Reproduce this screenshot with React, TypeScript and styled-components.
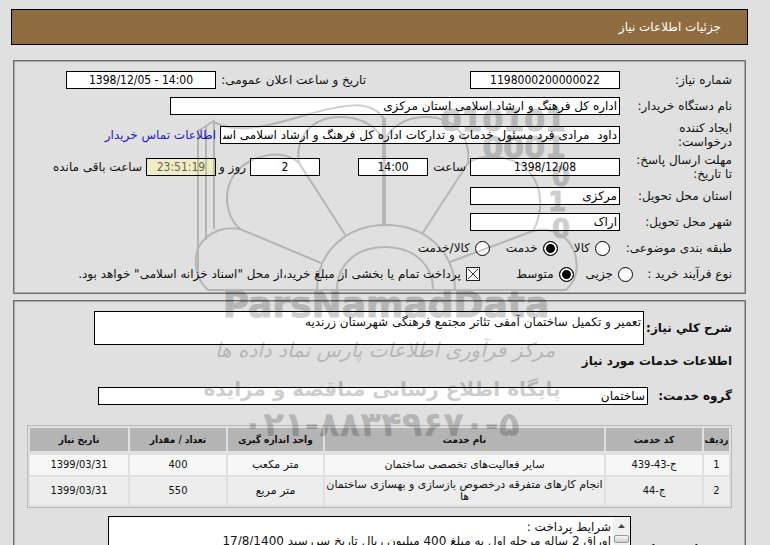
import React from "react";
import styled, { createGlobalStyle } from "styled-components";

const GlobalStyle = createGlobalStyle`
  *, *::before, *::after { box-sizing: border-box; }
  html { overflow-y: auto; scrollbar-width: none; }
  body {
    margin: 0;
    background: #e0e0e0;
    color: #111;
    font-family: "DejaVu Sans", Tahoma, sans-serif;
    font-size: 12px;
    line-height: 14px;
  }
  input, textarea { font: inherit; color: inherit; }
`;

const Page = styled.div`
  position: relative;
  overflow: hidden;
  padding: 9px 22px 12px 11px;
`;

const TitleBar = styled.header`
  display: flex;
  align-items: center;
  height: 36px;
  padding: 0 26px;
  border: 1px solid #000;
  background: #8f6d40;
`;

const Title = styled.h1`
  margin: 0;
  color: #fff;
  font-size: 12px;
  font-weight: normal;
`;

const Panel = styled.section<{ $top: number }>`
  margin: ${(p) => p.$top}px 2px 0;
  padding: 6px 13px;
  border: 1px solid #6e6e6e;
  box-shadow: inset 0 0 0 1px #a8a8a8;
`;

const Row = styled.div<{ $tall?: boolean }>`
  display: flex;
  align-items: center;
  gap: 4px;
  height: ${(p) => (p.$tall ? 32 : 26)}px;
  white-space: nowrap;
`;

const Label = styled.label<{ $width?: number; $bold?: boolean }>`
  flex: none;
  width: ${(p) => (p.$width ? `${p.$width}px` : "auto")};
  font-weight: ${(p) => (p.$bold ? "bold" : "normal")};
  white-space: nowrap;
`;

const TermsLabel = styled(Label)`
  font-family: "DejaVu Sans Condensed", "DejaVu Sans", sans-serif;
`;

const SideLabel = styled(Label)`
  width: 246px;
  padding-right: 100px;
`;

const Field = styled.input<{ $width: number; $center?: boolean; $timer?: boolean }>`
  flex: 0 1 ${(p) => p.$width}px;
  width: ${(p) => p.$width}px;
  min-width: 0;
  height: 18px;
  padding: 0 2px;
  border: 1px solid #000;
  border-radius: 0;
  outline: none;
  background: ${(p) => (p.$timer ? "#f0ecc6" : "#fff")};
  color: ${(p) => (p.$timer ? "#66664f" : "#000")};
  font-family: ${(p) => (p.$center ? '"DejaVu Sans Condensed", ' : "")}"DejaVu Sans", sans-serif;
  text-align: ${(p) => (p.$center ? "center" : "right")};
`;

const Spacer = styled.span<{ $width: number }>`
  flex: none;
  width: ${(p) => p.$width}px;
`;

const BuyerLink = styled.a`
  color: #1a1acc;
  text-decoration: none;
`;

const Choice = styled.label<{ $gap: number }>`
  display: flex;
  align-items: center;
  gap: 5px;
  margin-right: ${(p) => p.$gap}px;
`;

const Radio = styled.input.attrs({ type: "radio" })`
  appearance: none;
  width: 15px;
  height: 15px;
  margin: 0;
  border: 1px solid #000;
  border-radius: 50%;
  background: #fff;
  &:checked {
    background: #000;
    box-shadow: inset 0 0 0 2px #fff;
  }
`;

const TickBox = styled.span`
  display: grid;
  width: 14px;
  height: 14px;
  > * { grid-area: 1 / 1; }
  svg { pointer-events: none; }
`;

const Check = styled.input.attrs({ type: "checkbox" })`
  appearance: none;
  width: 14px;
  height: 14px;
  margin: 0;
  border: 1px solid #222;
  background: #fff;
  &:not(:checked) + svg { display: none; }
`;

const Description = styled.textarea`
  flex: 0 1 550px;
  min-width: 0;
  height: 34px;
  padding: 3px 2px;
  border: 1px solid #000;
  outline: none;
  resize: none;
  overflow: hidden;
  background: #fff;
`;

const DescriptionRow = styled.div`
  display: flex;
  align-items: center;
  padding-top: 4px;
`;

const SectionTitle = styled.h2`
  margin: 8px 0 18px;
  font-size: 12px;
  line-height: 16px;
  font-weight: bold;
`;

const GroupRow = styled.div`
  display: flex;
  align-items: center;
`;

const Services = styled.table`
  width: 100%;
  margin: 20px 0 8px;
  table-layout: fixed;
  border: 1px solid #b9b9b9;
  border-spacing: 2px;
  font-size: 11px;
  line-height: 12px;
  text-align: center;
`;

const Column = styled.col<{ $width?: number }>`
  width: ${(p) => (p.$width ? `${p.$width}px` : "auto")};
`;

const Head = styled.th`
  height: 25px;
  padding: 0;
  border-bottom: 2px solid transparent;
  background: #b4b4b4;
  background-clip: padding-box;
  white-space: nowrap;
  font-family: "DejaVu Sans Condensed", "DejaVu Sans", sans-serif;
  font-size: 10px;
`;

const Cell = styled.td<{ $shade?: boolean; $numeric?: boolean }>`
  height: ${(p) => (p.$shade ? 28 : 20)}px;
  padding: 1px 0;
  background: ${(p) => (p.$shade ? "#ededed" : "#f7f7f7")};
  font-family: ${(p) => (p.$numeric ? '"DejaVu Sans Condensed", ' : "")}"DejaVu Sans", sans-serif;
`;

const TermsRow = styled.div`
  display: flex;
  align-items: center;
`;

const TermsFrame = styled.div`
  display: flex;
  flex: 0 1 523px;
  min-width: 0;
  height: 66px;
  border: 1px solid #000;
  background: #fff;
`;

const Terms = styled.textarea`
  flex: 1;
  min-width: 0;
  padding: 3px 2px;
  border: 0;
  outline: none;
  resize: none;
  overflow: hidden;
  background: transparent;
`;

const ScrollTrack = styled.div`
  display: flex;
  flex-direction: column;
  align-items: center;
  width: 17px;
  background: #f0f0f0;
`;

const ScrollUp = styled.button`
  display: grid;
  place-items: center;
  width: 17px;
  height: 18px;
  padding: 0;
  border: 0;
  background: transparent;
`;

const ScrollThumb = styled.div`
  width: 15px;
  height: 8px;
  border: 1px solid #999;
  border-radius: 2px;
  background: linear-gradient(#f6f6f6, #cfcfcf);
`;

const Mark = styled.svg`
  position: absolute;
  top: 95px;
  left: 185px;
  width: 400px;
  height: 355px;
  pointer-events: none;
  opacity: 0.19;
  fill: none;
  stroke: #000;
  stroke-width: 2;
`;

const MarkText = styled.text<{ $heavy?: boolean; $script?: boolean }>`
  direction: ltr;
  fill: #000;
  stroke: ${(p) => (p.$heavy ? "#000" : "none")};
  stroke-width: 1;
  font-family: "DejaVu Sans", sans-serif;
  font-weight: ${(p) => (p.$script ? "normal" : "bold")};
  font-style: ${(p) => (p.$script ? "italic" : "normal")};
`;

const columns = [
  { title: "ردیف", width: 25 },
  { title: "کد خدمت", width: 96 },
  { title: "نام خدمت" },
  { title: "واحد اندازه گیری", width: 95 },
  { title: "تعداد / مقدار", width: 96 },
  { title: "تاریخ نیاز", width: 98 },
];

const services = [
  ["1", "ج-43-439", "سایر فعالیت‌های تخصصی ساختمان", "متر مکعب", "400", "1399/03/31"],
  ["2", "ج-44", "انجام کارهای متفرقه درخصوص بازسازی و بهسازی ساختمان ها", "متر مربع", "550", "1399/03/31"],
];

function Watermark() {
  return (
    <Mark viewBox="185 95 400 355" aria-hidden="true">
      <path d="M198 274V131L206 126L214 121V229M206 126V240M214 122C240 136 278 123 306 115C344 104 371 99 384 119" />
      <path d="M208 290H566M208 290C193 277 191 250 206 238C216 229 229 227 240 229L321 263" />
      <path d="M240 229C225 216 223 191 234 175C247 156 281 147 299 163L346 236" />
      <path d="M299 163C295 137 312 117 340 117C361 117 376 126 384 141" />
      <path d="M384 118V225" strokeWidth="4" />
      <path d="M384 141C392 126 406 117 426 117C454 117 471 137 468 163L422 234" />
      <path d="M468 163C487 151 518 157 531 174C543 190 543 213 533 231L450 262" />
      <path d="M533 231C552 226 568 236 574 251C579 266 577 280 566 290" />
      <path d="M317 290C317 251 347 225 386 225C425 225 455 251 455 290" />
      <path d="M337 290C337 264 357 247 385 247C413 247 433 264 433 290" />
      <MarkText $heavy x="566" y="131" fontSize="30" textAnchor="end">010101</MarkText>
      <MarkText $heavy x="566" y="158" fontSize="30" textAnchor="end">0001</MarkText>
      <MarkText $heavy x="570" y="186" fontSize="26" textAnchor="end">0</MarkText>
      <MarkText $heavy x="566" y="211" fontSize="26" textAnchor="end">1</MarkText>
      <MarkText $heavy x="570" y="238" fontSize="26" textAnchor="end">0</MarkText>
      <MarkText $heavy x="386" y="317" fontSize="36" textAnchor="middle">ParsNamadData</MarkText>
      <MarkText $script x="385" y="357" fontSize="20" textAnchor="middle">مرکز فرآوری اطلاعات پارس نماد داده ها</MarkText>
      <MarkText x="382" y="396" fontSize="20" textAnchor="middle">پایگاه اطلاع رسانی مناقصه و مزایده</MarkText>
      <MarkText x="381" y="436" fontSize="34" textAnchor="middle">۰۲۱-۸۸۳۴۹۶۷۰-۵</MarkText>
    </Mark>
  );
}

export default function App() {
  return (
    <Page dir="rtl" lang="fa">
      <GlobalStyle />
      <TitleBar>
        <Title>جزئیات اطلاعات نیاز</Title>
      </TitleBar>

      <Panel $top={15}>
        <Row>
          <Label htmlFor="number" $width={108}>شماره نیاز:</Label>
          <Field id="number" $width={150} $center defaultValue="1198000200000022" />
          <SideLabel htmlFor="announced">تاریخ و ساعت اعلان عمومی:</SideLabel>
          <Field id="announced" $width={150} $center dir="ltr" defaultValue="1398/12/05 - 14:00" />
        </Row>
        <Row>
          <Label htmlFor="buyer" $width={108}>نام دستگاه خریدار:</Label>
          <Field id="buyer" $width={450} defaultValue="اداره کل فرهنگ و ارشاد اسلامی استان مرکزی" />
        </Row>
        <Row $tall>
          <Label htmlFor="creator" $width={108}>ایجاد کننده<br />درخواست:</Label>
          <Field id="creator" $width={400} defaultValue="داود  مرادی فرد مسئول خدمات و تدارکات اداره کل فرهنگ و ارشاد اسلامی استان مرکزی" />
          <BuyerLink href="#contact">اطلاعات تماس خریدار</BuyerLink>
        </Row>
        <Row $tall>
          <Label htmlFor="deadline" $width={108}>مهلت ارسال پاسخ:<br />تا تاریخ:</Label>
          <Field id="deadline" $width={150} $center dir="ltr" defaultValue="1398/12/08" />
          <Label htmlFor="hour" $width={34}>ساعت</Label>
          <Field id="hour" $width={70} $center defaultValue="14:00" />
          <Spacer $width={30} />
          <Field id="days" $width={70} $center defaultValue="2" />
          <Label htmlFor="days" $width={26}>روز و</Label>
          <Field id="left" $width={70} $center $timer readOnly defaultValue="23:51:19" />
          <Label htmlFor="left">ساعت باقی مانده</Label>
        </Row>
        <Row>
          <Label htmlFor="province" $width={108}>استان محل تحویل:</Label>
          <Field id="province" $width={150} defaultValue="مرکزی" />
        </Row>
        <Row>
          <Label htmlFor="city" $width={108}>شهر محل تحویل:</Label>
          <Field id="city" $width={150} defaultValue="اراک" />
        </Row>
        <Row role="radiogroup" aria-label="طبقه بندی موضوعی">
          <Label as="span" $width={118}>طبقه بندی موضوعی:</Label>
          <Choice $gap={0}><Radio name="subject" />کالا</Choice>
          <Choice $gap={12}><Radio name="subject" defaultChecked />خدمت</Choice>
          <Choice $gap={12}><Radio name="subject" />کالا/خدمت</Choice>
        </Row>
        <Row role="radiogroup" aria-label="نوع فرآیند خرید">
          <Label as="span" $width={95}>نوع فرآیند خرید :</Label>
          <Choice $gap={0}><Radio name="process" />جزیی</Choice>
          <Choice $gap={8}><Radio name="process" defaultChecked />متوسط</Choice>
          <Choice $gap={32}>
            <TickBox>
              <Check defaultChecked />
              <svg viewBox="0 0 14 14" stroke="#333" strokeWidth="1">
                <path d="M2 2L12 12M12 2L2 12" />
              </svg>
            </TickBox>
            پرداخت تمام یا بخشی از مبلغ خرید،از محل "اسناد خزانه اسلامی" خواهد بود.
          </Choice>
        </Row>
      </Panel>

      <Panel $top={6}>
        <DescriptionRow>
          <Label htmlFor="summary" $width={88} $bold>شرح کلي نیاز:</Label>
          <Description id="summary" defaultValue="تعمیر و تکمیل ساختمان آمفی تئاتر مجتمع فرهنگی شهرستان زرندیه" />
        </DescriptionRow>
        <SectionTitle>اطلاعات خدمات مورد نیاز</SectionTitle>
        <GroupRow>
          <Label htmlFor="group" $width={84} $bold>گروه خدمت:</Label>
          <Field id="group" $width={550} defaultValue="ساختمان" />
        </GroupRow>
        <Services>
          <colgroup>
            {columns.map((c) => <Column key={c.title} $width={c.width} />)}
          </colgroup>
          <thead>
            <tr>{columns.map((c) => <Head key={c.title}>{c.title}</Head>)}</tr>
          </thead>
          <tbody>
            {services.map((row, r) => (
              <tr key={row[0]}>
                {row.map((value, i) => (
                  <Cell key={i} $shade={r % 2 === 1} $numeric={/\d/.test(value)}>{value}</Cell>
                ))}
              </tr>
            ))}
          </tbody>
        </Services>
        <TermsRow>
          <TermsLabel htmlFor="terms" $width={101} $bold>توضیحات خریدار:</TermsLabel>
          <TermsFrame>
            <ScrollTrack>
              <ScrollUp type="button" aria-label="بالا">
                <svg width="7" height="4" viewBox="0 0 7 4"><path d="M0 4L3.5 0L7 4Z" fill="#444" /></svg>
              </ScrollUp>
              <ScrollThumb />
            </ScrollTrack>
            <Terms id="terms" defaultValue={"شرایط پرداخت :\nاوراق 2 ساله مرحله اول به مبلغ 400 میلیون ریال تاریخ سررسید 17/8/1400"} />
          </TermsFrame>
        </TermsRow>
      </Panel>
      <Watermark />
    </Page>
  );
}
